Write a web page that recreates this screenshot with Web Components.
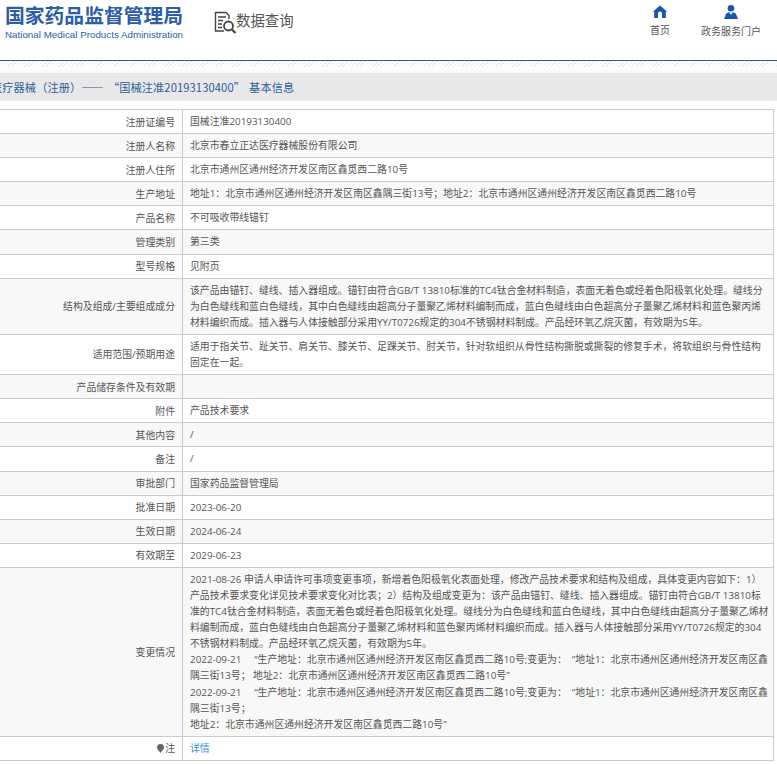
<!DOCTYPE html>
<html lang="zh">
<head>
<meta charset="utf-8">
<title>医疗器械（注册）</title>
<style>
html, body { margin: 0; padding: 0; background: #fff; height: 764px; overflow: hidden; }
body { font-family: "Open Sans", "Noto Sans CJK SC", "Liberation Sans", sans-serif; color: #555; }
</style>
</head>
<body>
<site-header></site-header>
<crumb-bar>医疗器械（注册）—— “国械注准20193130400” 基本信息</crumb-bar>
<info-table>
  <info-row label="注册证编号">国械注准20193130400</info-row>
  <info-row label="注册人名称">北京市春立正达医疗器械股份有限公司</info-row>
  <info-row label="注册人住所">北京市通州区通州经济开发区南区鑫觅西二路10号</info-row>
  <info-row label="生产地址">地址1：北京市通州区通州经济开发区南区鑫隅三街13号；地址2：北京市通州区通州经济开发区南区鑫觅西二路10号</info-row>
  <info-row label="产品名称">不可吸收带线锚钉</info-row>
  <info-row label="管理类别">第三类</info-row>
  <info-row label="型号规格">见附页</info-row>
  <info-row label="结构及组成/主要组成成分">该产品由锚钉、缝线、插入器组成。锚钉由符合GB/T 13810标准的TC4钛合金材料制造，表面无着色或经着色阳极氧化处理。缝线分<br>为白色缝线和蓝白色缝线，其中白色缝线由超高分子量聚乙烯材料编制而成，蓝白色缝线由白色超高分子量聚乙烯材料和蓝色聚丙烯<br>材料编织而成。插入器与人体接触部分采用YY/T0726规定的304不锈钢材料制成。产品经环氧乙烷灭菌，有效期为5年。</info-row>
  <info-row label="适用范围/预期用途">适用于指关节、趾关节、肩关节、膝关节、足踝关节、肘关节，针对软组织从骨性结构撕脱或撕裂的修复手术，将软组织与骨性结构<br>固定在一起。</info-row>
  <info-row label="产品储存条件及有效期"></info-row>
  <info-row label="附件">产品技术要求</info-row>
  <info-row label="其他内容">/</info-row>
  <info-row label="备注">/</info-row>
  <info-row label="审批部门">国家药品监督管理局</info-row>
  <info-row label="批准日期">2023-06-20</info-row>
  <info-row label="生效日期">2024-06-24</info-row>
  <info-row label="有效期至">2029-06-23</info-row>
  <info-row label="变更情况">2021-08-26 申请人申请许可事项变更事项，新增着色阳极氧化表面处理，修改产品技术要求和结构及组成，具体变更内容如下：1）<br>产品技术要求变化详见技术要求变化对比表；2）结构及组成变更为：该产品由锚钉、缝线、插入器组成。锚钉由符合GB/T 13810标<br>准的TC4钛合金材料制造，表面无着色或经着色阳极氧化处理。缝线分为白色缝线和蓝白色缝线，其中白色缝线由超高分子量聚乙烯材<br>料编制而成，蓝白色缝线由白色超高分子量聚乙烯材料和蓝色聚丙烯材料编织而成。插入器与人体接触部分采用YY/T0726规定的304<br>不锈钢材料制成。产品经环氧乙烷灭菌，有效期为5年。<br>2022-09-21 &nbsp;&nbsp;&nbsp;&nbsp;“生产地址：北京市通州区通州经济开发区南区鑫觅西二路10号;变更为： &nbsp;“地址1：北京市通州区通州经济开发区南区鑫<br>隅三街13号； 地址2：北京市通州区通州经济开发区南区鑫觅西二路10号”<br>2022-09-21 &nbsp;&nbsp;&nbsp;&nbsp;“生产地址：北京市通州区通州经济开发区南区鑫觅西二路10号;变更为： &nbsp;“地址1：北京市通州区通州经济开发区南区鑫<br>隅三街13号；<br>地址2：北京市通州区通州经济开发区南区鑫觅西二路10号”</info-row>
  <info-row label="注" pin><a href="#" style="color:#3f8fe8;text-decoration:none">详情</a></info-row>
</info-table>

<script>
// page parts
class SiteHeader extends HTMLElement {
  constructor() {
    super();
    this.attachShadow({ mode: 'open' });
    this.shadowRoot.innerHTML = `
    <style>
      :host { display: flex; height: 60px; box-sizing: border-box; padding: 0 17px 0 5px; font-family: "Noto Sans CJK SC", sans-serif; }
      .logo { width: 209px; padding-top: 3px; color: #2b5da8; }
      .logo b { display: block; font-size: 19.8px; line-height: 24px; white-space: nowrap; }
      .logo span { display: block; font: 9.8px/14px "Liberation Sans", sans-serif; margin-top: 1px; white-space: nowrap; }
      .query { display: flex; align-items: flex-start; flex: 1; padding-top: 10px; font-size: 14.4px; line-height: 20px; color: #555; }
      .query svg { margin-top: 1px; flex: none; }
      nav { display: flex; gap: 31px; padding-top: 5px; margin-right: -1px; font-size: 10px; color: #555; }
      nav div { display: flex; flex-direction: column; align-items: center; gap: 5px; line-height: 14px; white-space: nowrap; }
      nav svg { display: block; }
    </style>
    <div class="logo"><b>国家药品监督管理局</b><span>National Medical Products Administration</span></div>
    <div class="query">
      <svg width="22" height="23" viewBox="0 0 22 23" fill="none" stroke="#444" stroke-width="1.4">
        <path d="M10 20H1.500V1.500H12L15 4.500V8"/>
        <path d="M4 6h8M4 9.500h5M4 13h4M4 16.500h4"/>
        <circle cx="14.500" cy="15" r="4.500" stroke-width="1.800"/>
        <path d="M18 18.500l3.500 3.500" stroke-width="2.200"/>
      </svg>
      <span>数据查询</span>
    </div>
    <nav>
      <div>
        <svg width="14" height="13" viewBox="0 0 14 13" fill="#1a56ad"><path d="M7 0.500L14 6.500 12.800 6.800V13H9V8.500A2 2 0 0 0 5 8.500V13H1.200V6.800L0 6.500Z"/></svg>
        首页
      </div>
      <div>
        <svg width="14" height="14" viewBox="0 0 14 14"><circle cx="7" cy="3.300" r="3.300" fill="#1a56ad"/><path fill="#1a56ad" d="M0 14L2.200 8.500 5 7.300H9L11.800 8.500 14 14Z"/><path fill="#fff" d="M5 7.300H9L7 9.800Z"/></svg>
        政务服务门户
      </div>
    </nav>`;
  }
}

class CrumbBar extends HTMLElement {
  constructor() {
    super();
    this.attachShadow({ mode: 'open' });
    this.shadowRoot.innerHTML = `
    <style>
      :host { display: block; border-top: 1px solid #2a5f96; overflow: hidden; }
      .hatch { height: 6px; background: repeating-linear-gradient(135deg, #e6edf3 0 1px, #fff 1px 3px); }
      .fade { height: 6px; background: linear-gradient(#fff, #f8f8f8); }
      .bar { height: 28px; background: #e8e8e8; color: #2b5f96; font-family: "Noto Sans CJK SC", sans-serif; font-size: 11.2px; line-height: 28px; white-space: nowrap; }
      .bar span { display: block; margin-left: -9px; letter-spacing: 0.1px; word-spacing: 1.5px; }
    </style>
    <div class="hatch"></div><div class="fade"></div>
    <div class="bar"><span><slot></slot></span></div>`;
  }
}

class InfoTable extends HTMLElement {
  constructor() {
    super();
    this.attachShadow({ mode: 'open' });
    this.shadowRoot.innerHTML = `
    <style>
      :host { display: block; width: 774px; margin-top: 8px; border-top: 1px solid #ccc; border-right: 1px solid #ccc; box-sizing: border-box; }
    </style>
    <slot></slot>`;
  }
}

class InfoRow extends HTMLElement {
  constructor() {
    super();
    this.attachShadow({ mode: 'open' });
    const pin = this.hasAttribute('pin')
      ? '<svg width="7" height="9" viewBox="0 0 7 9" fill="#666"><path d="M3.500 0a3.500 3.500 0 0 1 3.500 3.500C7 5.600 4.800 7 3.500 9 2.200 7 0 5.600 0 3.500A3.500 3.500 0 0 1 3.500 0Z"/></svg>'
      : '';
    this.shadowRoot.innerHTML = `
    <style>
      :host { display: grid; grid-template-columns: 183px 1fr; border-bottom: 1px solid #ccc; background: #fff; font-size: 9.85px; line-height: 16.1px; color: #555; }
      :host(:nth-child(even)) { background: #f8f8f8; }
      .label { display: flex; align-items: center; justify-content: flex-end; gap: 1px; padding-right: 7px; border-right: 1px solid #ccc; white-space: nowrap; }
      .value { padding: 3px 0 4px 7px; white-space: nowrap; min-height: 16.1px; }
    </style>
    <div class="label">${pin}<span>${this.getAttribute('label')}</span></div>
    <div class="value"><slot></slot></div>`;
  }
}

customElements.define('site-header', SiteHeader);
customElements.define('crumb-bar', CrumbBar);
customElements.define('info-table', InfoTable);
customElements.define('info-row', InfoRow);
</script>
</body>
</html>
